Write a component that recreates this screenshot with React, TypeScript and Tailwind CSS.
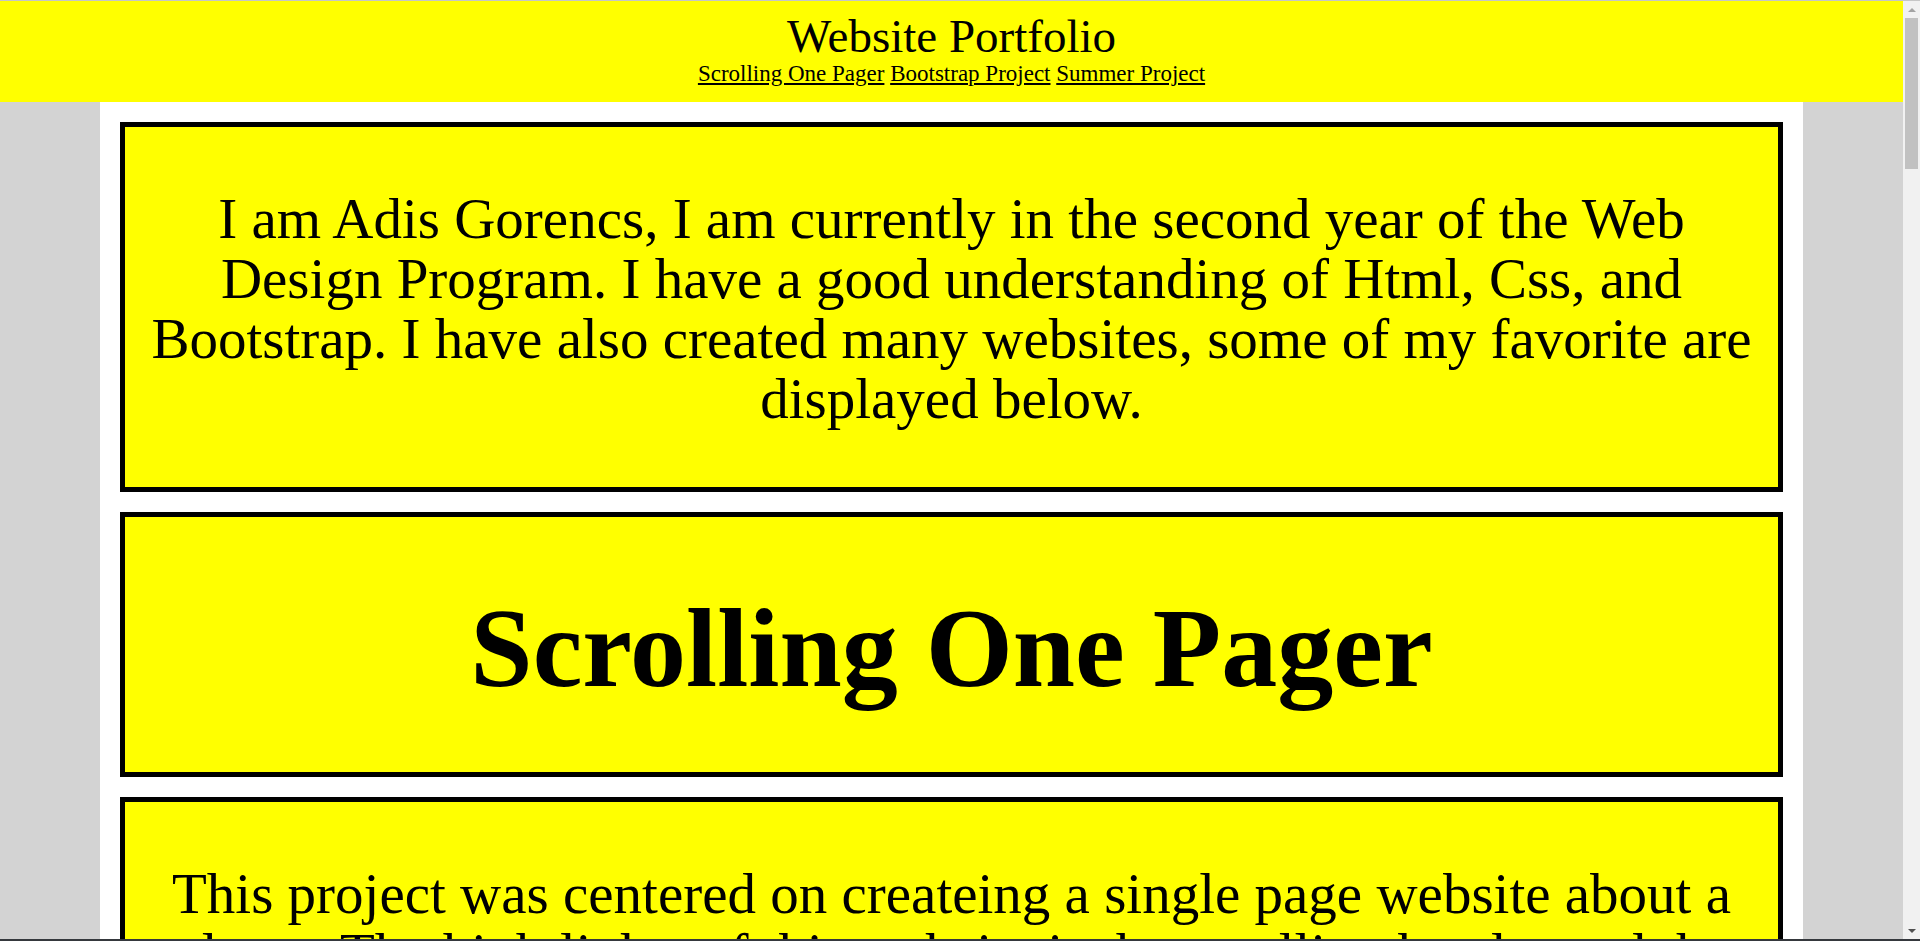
const projects = [
  {
    title: "Scrolling One Pager",
    lines: [
      "This project was centered on createing a single page website about a",
      "planet. The hightlights of this website is the scrolling header and the",
      "smooth links that move you down the page.",
    ],
  },
  {
    title: "Bootstrap Project",
    lines: [
      "This project was built with Bootstrap. It uses the grid system, a",
      "navigation bar, and cards to show the content on every screen size.",
    ],
  },
  {
    title: "Summer Project",
    lines: [
      "This project was made over the summer. It is a small website that",
      "shows what I have learned about Html and Css on my own.",
    ],
  },
];

const intro = [
  "I am Adis Gorencs, I am currently in the second year of the Web",
  "Design Program. I have a good understanding of Html, Css, and",
  "Bootstrap. I have also created many websites, some of my favorite are",
  "displayed below.",
];

function Box({ children, className }: { children: React.ReactNode; className: string }) {
  return (
    <div className={"border-[5px] border-black bg-[#ffff00] text-center " + className}>{children}</div>
  );
}

function Lines({ lines }: { lines: string[] }) {
  return (
    <p className="whitespace-nowrap text-[57px] leading-[60px]">
      {lines.map((l, i) => (
        <span key={i} className="block">
          {l}
        </span>
      ))}
    </p>
  );
}

export default function App() {
  return (
    <div className="flex h-screen flex-col overflow-hidden bg-[#d3d3d3] font-['Liberation_Serif',serif] text-black">
      <div className="h-px shrink-0 bg-[#c6c6c6]" />
      <div className="flex min-h-0 flex-1">
        <div className="min-w-0 flex-1 overflow-hidden">
          <header className="bg-[#ffff00] pt-[10px] pb-[15px] text-center">
            <h1 className="text-[47px] leading-[50px]">Website Portfolio</h1>
            <nav className="text-[23px] leading-[26px]">
              <a href="#scrolling" className="underline">Scrolling One Pager</a>{" "}
              <a href="#bootstrap" className="underline">Bootstrap Project</a>{" "}
              <a href="#summer" className="underline">Summer Project</a>
            </nav>
          </header>

          <main className="mx-[100px] flex flex-col gap-[20px] bg-white p-[20px]">
            <Box className="px-[10px] pt-[62px] pb-[58px]">
              <Lines lines={intro} />
            </Box>

            {projects.map((p) => (
              <div key={p.title} className="flex flex-col gap-[20px]">
                <Box className="px-[10px] pt-[67px] pb-[60px]">
                  <h2 className="text-[112px] font-bold leading-[128px]">{p.title}</h2>
                </Box>
                <Box className="px-[10px] pt-[62px] pb-[58px]">
                  <Lines lines={p.lines} />
                </Box>
              </div>
            ))}
          </main>
        </div>

        {/* scrollbar */}
        <div className="flex w-[17px] shrink-0 flex-col bg-[#f1f1f1]">
          <div className="flex h-[17px] items-center justify-center">
            <div className="h-0 w-0 border-x-[4px] border-b-[4px] border-x-transparent border-b-[#a3a3a3]" />
          </div>
          <div className="mx-[2px] h-[151px] bg-[#c1c1c1]" />
          <div className="flex-1" />
          <div className="flex h-[17px] items-center justify-center">
            <div className="h-0 w-0 border-x-[4px] border-t-[4px] border-x-transparent border-t-[#505050]" />
          </div>
        </div>
      </div>
      <div className="h-[2px] shrink-0 bg-[#35383d]" />
    </div>
  );
}
